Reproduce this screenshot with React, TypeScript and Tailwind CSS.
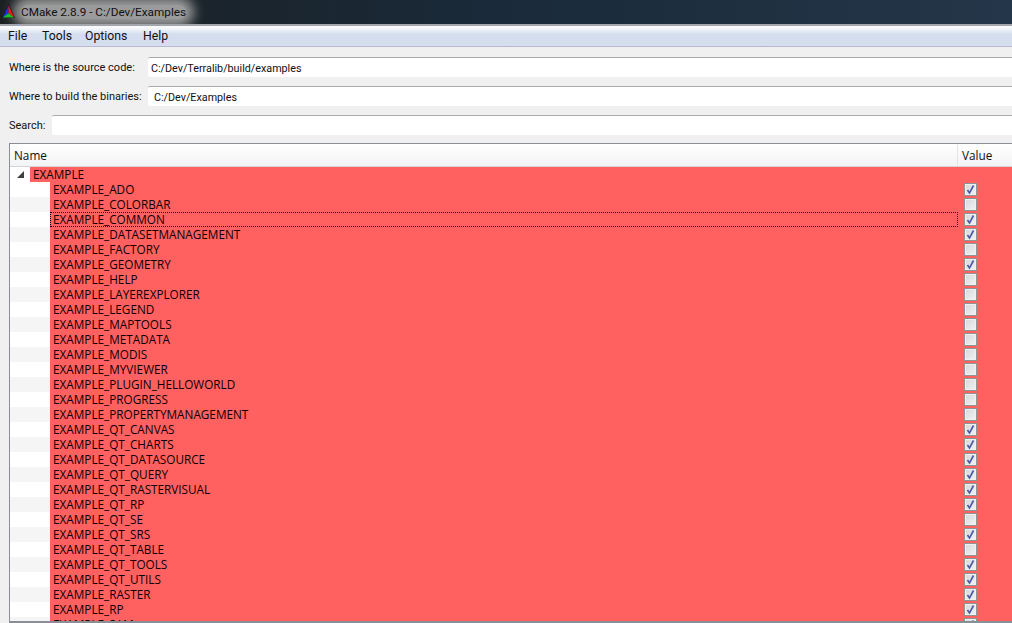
import { Fragment } from 'react'

// [name, checked]
const ROWS: [string, boolean][] = [
  ['EXAMPLE_ADO', true],
  ['EXAMPLE_COLORBAR', false],
  ['EXAMPLE_COMMON', true],
  ['EXAMPLE_DATASETMANAGEMENT', true],
  ['EXAMPLE_FACTORY', false],
  ['EXAMPLE_GEOMETRY', true],
  ['EXAMPLE_HELP', false],
  ['EXAMPLE_LAYEREXPLORER', false],
  ['EXAMPLE_LEGEND', false],
  ['EXAMPLE_MAPTOOLS', false],
  ['EXAMPLE_METADATA', false],
  ['EXAMPLE_MODIS', false],
  ['EXAMPLE_MYVIEWER', false],
  ['EXAMPLE_PLUGIN_HELLOWORLD', false],
  ['EXAMPLE_PROGRESS', false],
  ['EXAMPLE_PROPERTYMANAGEMENT', false],
  ['EXAMPLE_QT_CANVAS', true],
  ['EXAMPLE_QT_CHARTS', true],
  ['EXAMPLE_QT_DATASOURCE', true],
  ['EXAMPLE_QT_QUERY', true],
  ['EXAMPLE_QT_RASTERVISUAL', true],
  ['EXAMPLE_QT_RP', true],
  ['EXAMPLE_QT_SE', false],
  ['EXAMPLE_QT_SRS', true],
  ['EXAMPLE_QT_TABLE', false],
  ['EXAMPLE_QT_TOOLS', true],
  ['EXAMPLE_QT_UTILS', true],
  ['EXAMPLE_RASTER', true],
  ['EXAMPLE_RP', true],
  ['EXAMPLE_SAM', true],
]

function CheckBox({ checked }: { checked: boolean }) {
  return (
    <div className="relative w-[13px] h-[13px] border border-[#8f9496] bg-gradient-to-br from-[#d4d7dc] to-[#f2f2f2] shadow-[inset_0_0_0_1px_#f0f0f0]">
      {checked && (
        <svg viewBox="0 0 13 13" className="absolute left-[-1px] top-[-1px] w-[13px] h-[13px]">
          <path d="M3.5 7 L5.5 10 L9.5 2.5" fill="none" stroke="#4a5aa8" strokeWidth="1.6" />
        </svg>
      )}
    </div>
  )
}

function PathRow({ label, value, labelClass, inputClass }: { label: string; value?: string; labelClass: string; inputClass: string }) {
  return (
    <div className="flex items-center pl-[9px] h-[20px]">
      <span className={`shrink-0 pt-[3px] text-[11px] text-[#111] ${labelClass}`}>{label}</span>
      <div className={`h-[20px] flex-1 min-w-[1000px] bg-white border-t border-[#a9abad] rounded-[2px] text-[10.75px] leading-[21px] text-[#111] ${inputClass}`}>
        {value}
      </div>
    </div>
  )
}

export default function App() {
  return (
    <div className="w-[1012px] h-[623px] overflow-hidden bg-[#f0f0f0] flex flex-col font-['Roboto','Noto_Sans',sans-serif]">
      {/* Title bar */}
      <div className="h-[24px] shrink-0 flex items-center overflow-hidden bg-gradient-to-r from-[#1b2022] via-[#1a2a3a] to-[#243649]">
        <svg viewBox="0 0 14 14" preserveAspectRatio="none" className="ml-[2px] -mt-[3px] w-[13px] h-[15px] shrink-0 relative z-10">
          <path d="M7 0 L14 14 L0 14 Z" fill="#1c1c1c" />
          <path d="M7 2 L7 9.5 L0.8 13.5 Z" fill="#1a2cf0" />
          <path d="M7 2 L13.2 13.5 L7 9.5 Z" fill="#f01818" />
          <path d="M7 9.5 L13.2 13.5 L0.8 13.5 Z" fill="#18c028" />
        </svg>
        <span className="ml-[6px] text-[11.75px] text-[#111] bg-[#9b9b9b] shadow-[0_0_12px_8px_#9b9b9b] rounded-[8px] leading-[14px] whitespace-nowrap">
          CMake 2.8.9 - C:/Dev/Examples
        </span>
      </div>
      <div className="h-[2px] shrink-0 bg-[#a3a7ab]" />

      {/* Menu */}
      <div className="h-[21px] shrink-0 flex items-center pl-[8px] text-[12.25px] text-[#111] bg-gradient-to-b from-[#f7f9fc] from-10% to-[#d5deef] to-40% border-b border-[#b9b9d2]">
        <span className="w-[34px]">File</span>
        <span className="w-[43px]">Tools</span>
        <span className="w-[58px]">Options</span>
        <span>Help</span>
      </div>

      {/* Paths */}
      <div className="shrink-0 flex flex-col gap-[9px] pt-[10px]">
        <PathRow label="Where is the source code:" value="C:/Dev/Terralib/build/examples" labelClass="w-[139px]" inputClass="pl-[3px]" />
        <PathRow label="Where to build the binaries:" value="C:/Dev/Examples" labelClass="w-[139px]" inputClass="pl-[6px]" />
        <PathRow label="Search:" labelClass="w-[43px]" inputClass="" />
      </div>

      {/* Tree */}
      <div className="mt-[8px] ml-[9px] w-[1010px] flex-1 min-h-0 overflow-hidden bg-white border border-[#8a8f96] border-b-2 text-[11.75px] text-[#100000] font-['Open_Sans','Noto_Sans',sans-serif]">
        <div className="h-[23px] flex bg-gradient-to-b from-white to-[#f3f4f5] border-b border-[#d5d5d5] text-[11.75px] text-[#111]">
          <div className="w-[948px] pl-[4px] leading-[23px] border-r border-[#e3e4e6]">Name</div>
          <div className="pl-[4px] leading-[23px]">Value</div>
        </div>
        <div className="grid grid-cols-[40px_1fr] auto-rows-[15px] leading-[15px]">
          <div className="flex bg-white">
            <div className="w-[14px] flex items-center justify-end">
              <svg viewBox="0 0 7 7" className="w-[7px] h-[7px]">
                <path d="M7 0 L7 7 L0 7 Z" fill="#404040" />
              </svg>
            </div>
          </div>
          <div className="bg-[#ff6060] -ml-[20px] pl-[3px]">EXAMPLE</div>
          {ROWS.map(([name, checked], i) => (
            <Fragment key={name}>
              <div className={i % 2 === 0 ? 'bg-white' : 'bg-[#f5f5f5]'} />
              <div className="relative flex bg-[#ff6060]">
                <div className="w-[909px] pl-[3px]">{name}</div>
                <div className="pl-[5px] pt-[1px]">
                  <CheckBox checked={checked} />
                </div>
                {name === 'EXAMPLE_COMMON' && (
                  <div className="absolute left-0 top-0 w-[908px] h-[15px] border border-dotted border-black" />
                )}
              </div>
            </Fragment>
          ))}
        </div>
      </div>
    </div>
  )
}
